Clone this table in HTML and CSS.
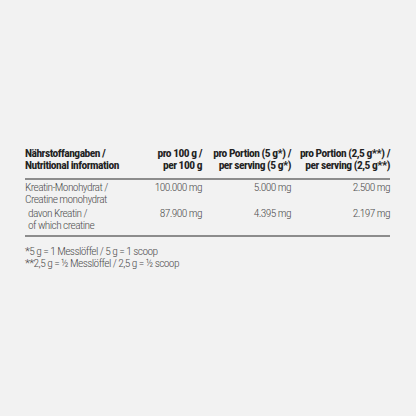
FILE: index.html
```html
<!DOCTYPE html>
<html lang="de">
<head>
<meta charset="utf-8">
<link rel="stylesheet" href="styles.css">
</head>
<body>
<div class="wrap">
  <table class="nutri">
    <colgroup>
      <col class="w1"><col class="w2"><col class="w3"><col class="w4">
    </colgroup>
    <thead>
      <tr>
        <th class="c1">Nährstoffangaben /<br>Nutritional information</th>
        <th class="num">pro 100 g /<br>per 100 g</th>
        <th class="num">pro Portion (5 g*) /<br>per serving (5 g*)</th>
        <th class="num">pro Portion (2,5 g**) /<br>per serving (2,5 g**)</th>
      </tr>
    </thead>
    <tbody>
      <tr class="r1">
        <td class="c1">Kreatin-Monohydrat /<br>Creatine monohydrat</td>
        <td class="num">100.000 mg</td>
        <td class="num">5.000 mg</td>
        <td class="num">2.500 mg</td>
      </tr>
      <tr class="r2">
        <td class="c1 sub">davon Kreatin /<br>of which creatine</td>
        <td class="num">87.900 mg</td>
        <td class="num">4.395 mg</td>
        <td class="num">2.197 mg</td>
      </tr>
    </tbody>
  </table>
  <div class="notes">
    <p>*5 g = 1 Messlöffel / 5 g = 1 scoop</p>
    <p>**2,5 g = ½ Messlöffel / 2,5 g = ½ scoop</p>
  </div>
</div>
</body>
</html>
```
FILE: styles.css
```css
html, body {
  margin: 0;
  padding: 0;
  background: #f2f2f2;
}
body {
  font-family: "Roboto Condensed", "Liberation Sans Narrow", sans-serif;
  color: #555;
  width: 416px;
  height: 416px;
}
.wrap {
  padding: 147px 26px 0 25px;
}
.nutri {
  width: 365px;
  table-layout: fixed;
  border-collapse: collapse;
  font-size: 11.5px;
  line-height: 12px;
}
.w1 { width: 120px; }
.w2 { width: 57px; }
.w3 { width: 89px; }
.w4 { width: 99px; }
.nutri th {
  font-weight: 700;
  color: #222;
  text-align: left;
  vertical-align: top;
  padding: 0 0 7px 0;
  border-bottom: 2px solid #8c8c8c;
  letter-spacing: -0.5px;
  white-space: nowrap;
}
.nutri td {
  font-weight: 300;
  color: #505050;
  vertical-align: top;
  padding: 0;
  letter-spacing: -0.6px;
  white-space: nowrap;
}
.nutri .num {
  text-align: right;
}
.nutri .c1 {
  text-align: left;
}
.nutri tr.r1 td {
  padding-top: 1px;
  padding-bottom: 2px;
}
.nutri tr.r2 td {
  padding-bottom: 4px;
  border-bottom: 2px solid #8c8c8c;
}
.nutri td.sub {
  padding-left: 3px;
}
.notes {
  margin-top: 8px;
  font-size: 11.5px;
  line-height: 12px;
  font-weight: 300;
  color: #505050;
  letter-spacing: -0.6px;
}
.notes p {
  margin: 0;
}
```
